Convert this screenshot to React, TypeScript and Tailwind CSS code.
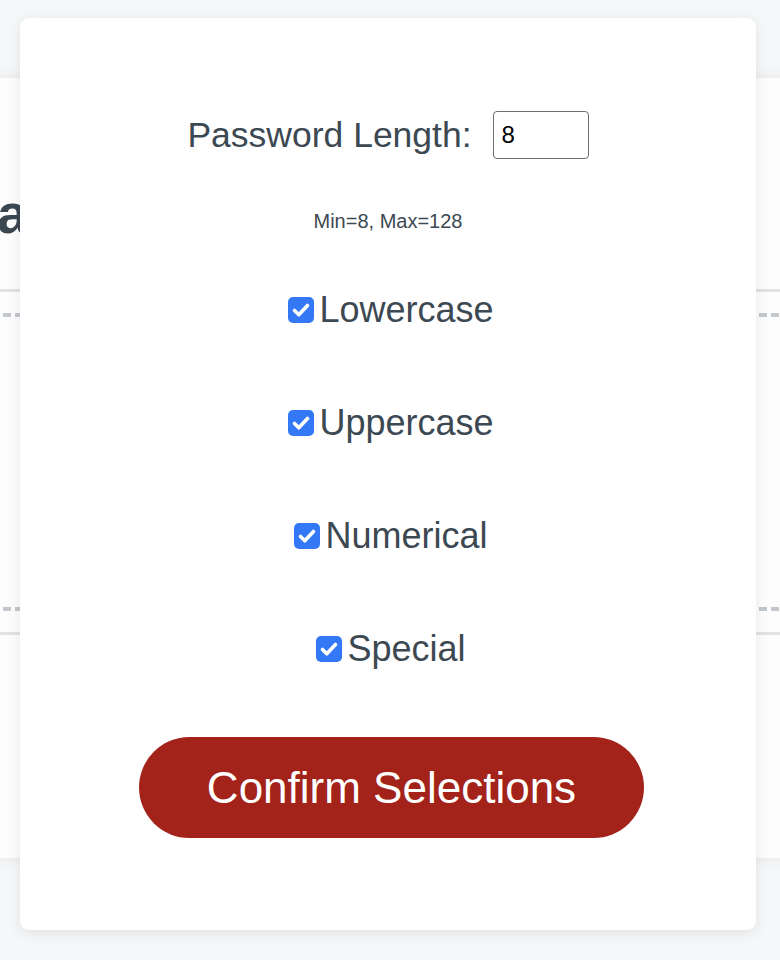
import { useState } from 'react'

const font = { fontFamily: '"Liberation Sans", Arial, Helvetica, sans-serif' }

interface Option {
  key: string
  label: string
}

const options: Option[] = [
  { key: 'lower', label: 'Lowercase' },
  { key: 'upper', label: 'Uppercase' },
  { key: 'number', label: 'Numerical' },
  { key: 'special', label: 'Special' },
]

function CheckBox({ checked, onToggle }: { checked: boolean; onToggle: () => void }) {
  return (
    <button
      type="button"
      onClick={onToggle}
      className={`w-[26px] h-[26px] rounded-[5px] flex items-center justify-center shrink-0 ${
        checked ? 'bg-[#3478f6]' : 'bg-white border-2 border-[#767676]'
      }`}
    >
      {checked && (
        <svg width="26" height="26" viewBox="0 0 26 26" fill="none">
          <path d="M6.5 13.5 L10.8 17.8 L19.5 8.5" stroke="white" strokeWidth="3.6" strokeLinecap="round" strokeLinejoin="round" />
        </svg>
      )}
    </button>
  )
}

export default function App() {
  const [length, setLength] = useState('8')
  const [checked, setChecked] = useState<Record<string, boolean>>({
    lower: true,
    upper: true,
    number: true,
    special: true,
  })

  const toggle = (key: string) => setChecked((c) => ({ ...c, [key]: !c[key] }))

  return (
    <div className="relative w-full h-[960px] overflow-hidden bg-[#f6f7f9]" style={font}>
      {/* page behind the modal */}
      <div className="h-[78px]" />
      <div className="-mx-[20px] h-[780px] bg-[#fdfdfd] shadow-[0_0_14px_rgba(0,0,0,0.07)] flex flex-col">
        <h1 className="mt-[108px] pl-[20px] -ml-[3px] text-[56px] leading-[56px] font-bold text-[#3a4650]">
          a
        </h1>
        <div className="mt-[47px] h-[3px] bg-[#e1e3e6]" />
        <div className="mt-[21px] ml-[20px] h-[4px] bg-[repeating-linear-gradient(90deg,transparent_0_3px,#c3c8cf_3px_11px,transparent_11px_12px)]" />
        <div className="h-[290px]" />
        <div className="ml-[20px] h-[4px] bg-[repeating-linear-gradient(90deg,transparent_0_3px,#c3c8cf_3px_11px,transparent_11px_12px)]" />
        <div className="mt-[21px] h-[3px] bg-[#e1e3e6]" />
      </div>

      {/* modal */}
      <div className="absolute left-[20px] top-[18px] w-[736px] h-[912px] bg-white rounded-[9px] shadow-[0_3px_14px_rgba(0,0,0,0.09)] flex flex-col items-center pt-[93px] text-[#3c4852]">
        <div className="flex items-center h-[48px]">
          <label className="text-[35.5px] leading-[40px]">Password Length:</label>
          <input
            value={length}
            onChange={(e) => setLength(e.target.value)}
            className="ml-[21px] w-[96px] h-[48px] border-[1.5px] border-[#6e6e6e] rounded-[4px] pl-[8px] text-[24px] text-black outline-none"
            style={font}
          />
        </div>

        <p className="mt-[50px] text-[20px] leading-[24px]">Min=8, Max=128</p>

        <div className="mt-[57px] ml-[6px] flex flex-col items-center gap-[73px]">
          {options.map((o) => (
            <div key={o.key} className="flex items-center gap-[5px] h-[40px]">
              <CheckBox checked={checked[o.key]} onToggle={() => toggle(o.key)} />
              <span className="text-[36px] leading-[40px]">{o.label}</span>
            </div>
          ))}
        </div>

        <button
          type="button"
          className="mt-[68px] ml-[7px] w-[505px] h-[101px] rounded-full bg-[#a3221a] text-white text-[44px] leading-none"
          style={font}
        >
          Confirm Selections
        </button>
      </div>
    </div>
  )
}
